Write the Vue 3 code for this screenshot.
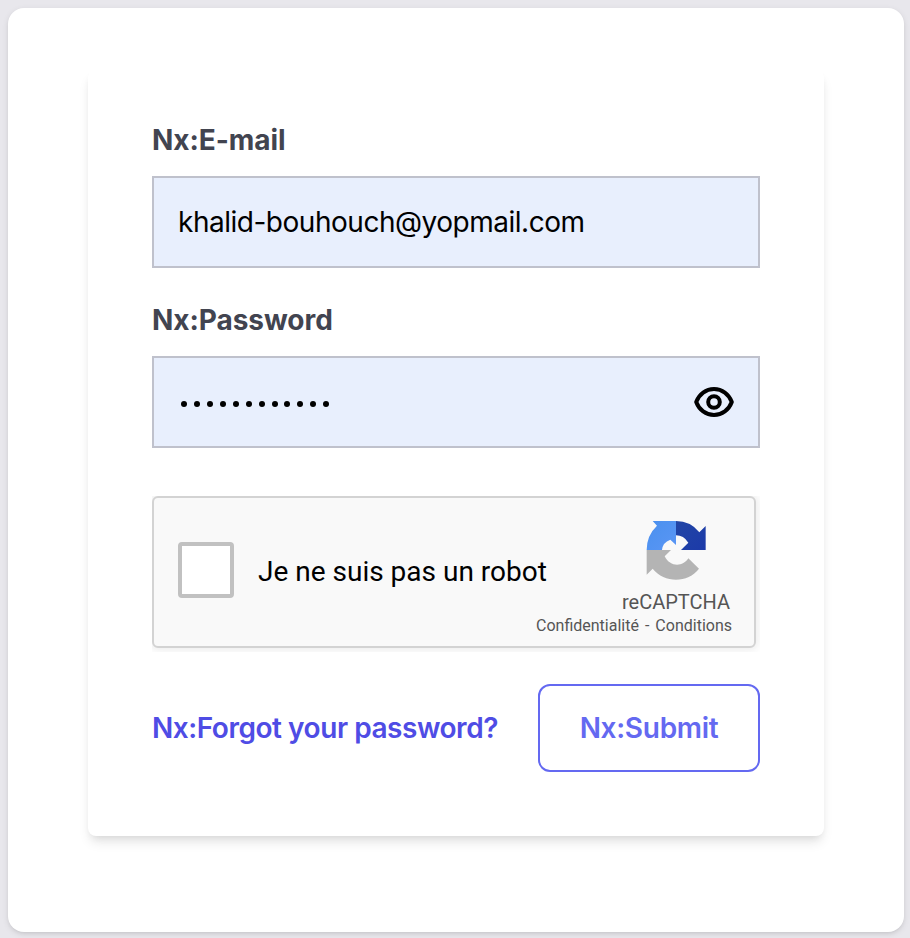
<script setup>
import { ref } from 'vue'

const email = ref('khalid-bouhouch@yopmail.com')
const passwordLength = 12
</script>

<template>
  <main class="page">
    <section class="card">
      <form class="panel" @submit.prevent>
        <label class="label">Nx:E-mail</label>
        <div class="field"><span class="value">{{ email }}</span></div>
        <label class="label second">Nx:Password</label>
        <div class="field">
          <div class="dots"><i v-for="n in passwordLength" :key="n" class="dot"></i></div>
          <svg class="eye" width="40" height="32" viewBox="0 0 40 32" fill="none" stroke="#000" stroke-width="4">
            <path d="M2.2 16C5.1 8.2 11.9 3.1 20 3.1S34.900 8.200 37.800 16C34.900 23.800 28.100 28.900 20 28.900S5.100 23.800 2.200 16Z" stroke-linejoin="round" />
            <circle cx="20" cy="16" r="5.800" />
          </svg>
        </div>
        <div class="captcha">
          <span class="check"></span>
          <span class="robot">Je ne suis pas un robot</span>
          <div class="brand">
            <svg class="logo" width="62" height="62" viewBox="45 27 186 186">
              <defs>
                <linearGradient id="light" x1="0" y1="0" x2="1" y2="1">
                  <stop offset="0" stop-color="#4a90ee" /><stop offset="1" stop-color="#5a96f5" />
                </linearGradient>
                <linearGradient id="dark" x1="0" y1="0" x2="1" y2="1">
                  <stop offset="0" stop-color="#2145a5" /><stop offset="1" stop-color="#1c3aa9" />
                </linearGradient>
              </defs>
              <path fill="#b4b4b4" d="M50 120H123L104 139C120 172 159 171 175 145L207 176C174 220 103 220 68 176L50 194Z" />
              <path fill="url(#light)" d="M68 33H138V105L121 89Q98 97 96 120H50Q50 76 81 47Z" />
              <path fill="url(#dark)" d="M138 33Q182 33 208 67L227 48V120H153L175 98Q161 76 138 76Z" />
            </svg>
            <span class="name">reCAPTCHA</span>
            <span class="terms">Confidentialité<span class="dash">-</span>Conditions</span>
          </div>
        </div>
        <div class="actions">
          <a class="forgot">Nx:Forgot your password?</a>
          <button class="submit" type="submit">Nx:Submit</button>
        </div>
      </form>
    </section>
  </main>
</template>

<style>
body { background: #e8e7ec; }
</style>

<style scoped>
* { box-sizing: border-box; }
.page {
  width: 910px;
  height: 938px;
  padding: 8px 6px 6px 8px;
  overflow: hidden;
  background: #e8e7ec;
  font-family: Inter, sans-serif;
  font-size: 28px;
}
.card {
  height: 924px;
  padding: 62px 80px 96px;
  border-radius: 16px;
  background: #fff;
  box-shadow: 0 2px 6px rgba(0, 0, 0, 0.1), 0 2px 4px -2px rgba(0, 0, 0, 0.1);
}
.panel {
  height: 766px;
  padding: 50px 64px 64px;
  border-radius: 8px;
  background: #fff;
  box-shadow: 0 8px 12px -2px rgba(0, 0, 0, 0.1), 0 4px 8px -4px rgba(0, 0, 0, 0.1);
}
.label {
  display: block;
  height: 40px;
  margin-bottom: 16px;
  line-height: 40px;
  font-weight: 700;
  letter-spacing: -0.05px;
  color: #424450;
}
.second { margin-top: 32px; }
.field {
  display: flex;
  align-items: center;
  justify-content: space-between;
  height: 92px;
  padding: 0 24px;
  border: 2px solid #bfc1cc;
  background: #e8effd;
  color: #000;
}
.value { letter-spacing: -0.48px; }
.dots { display: flex; gap: 6.9px; padding: 3px 0 0 3.300px; }
.dot { width: 6px; height: 6px; border-radius: 50%; background: #000; }
.captcha {
  display: flex;
  align-items: center;
  width: 604px;
  height: 152px;
  margin-top: 48px;
  padding: 0 22px 0 24px;
  border: 2px solid #d3d3d3;
  border-radius: 6px;
  background: #f9f9f9;
  box-shadow: 0 0 8px 2px rgba(0, 0, 0, 0.08);
  clip-path: inset(0 -4px -4px 0);
  font-family: Roboto, sans-serif;
  color: #000;
}
.check {
  flex: none;
  width: 56px;
  height: 56px;
  margin-top: -4px;
  border: 4px solid #c1c1c1;
  border-radius: 4px;
  background: #fff;
}
.robot { margin-left: 24px; line-height: 34px; white-space: nowrap; }
.brand {
  display: flex;
  flex-direction: column;
  align-items: flex-end;
  align-self: flex-start;
  width: 110px;
  margin-left: auto;
  padding-top: 21px;
  color: #555;
}
.logo { flex: none; margin-right: 25px; }
.name { margin: 9px 2px 0 0; font-size: 20px; line-height: 24px; }
.terms { margin-top: 1px; font-size: 16px; line-height: 22px; white-space: nowrap; }
.dash { margin: 0 6px; }
.actions {
  display: flex;
  align-items: center;
  justify-content: space-between;
  margin-top: 36px;
}
.forgot { font-weight: 600; letter-spacing: -0.46px; color: #4f4ce5; white-space: nowrap; }
.submit {
  width: 222px;
  height: 88px;
  padding: 0;
  border: 2px solid #6469f1;
  border-radius: 12px;
  background: #fff;
  font: 600 28px Inter, sans-serif;
  letter-spacing: -0.3px;
  color: #6469f1;
}
</style>
